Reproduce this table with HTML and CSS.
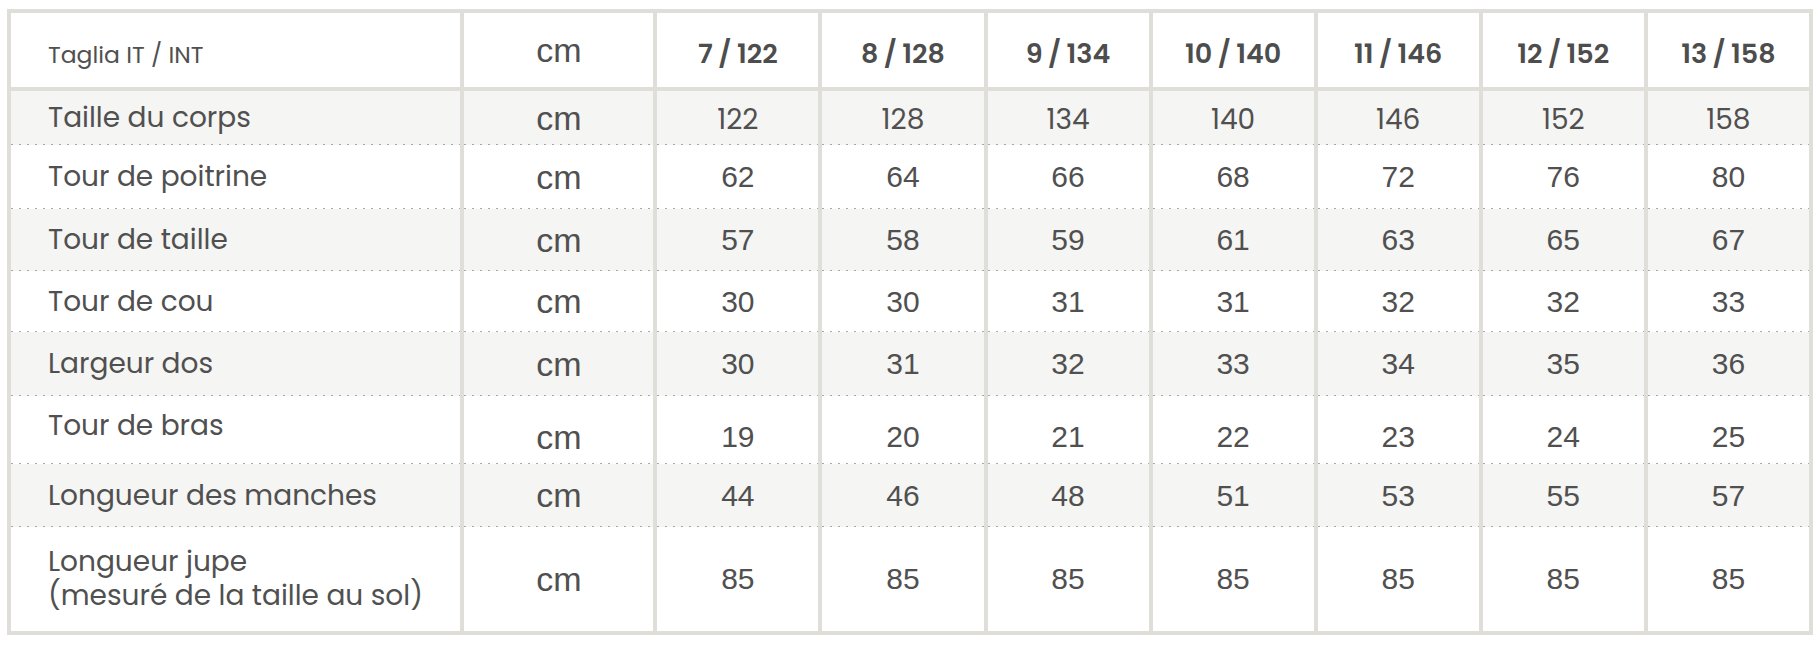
FILE: index.html
```html
<!DOCTYPE html>
<html lang="fr">
<head>
<meta charset="utf-8">
<title>Guide des tailles</title>
<link rel="stylesheet" href="styles.css">
</head>
<body>
<div class="page">
<table class="sizes">
  <colgroup>
    <col class="c-label">
    <col class="c-unit">
    <col class="c-size"><col class="c-size"><col class="c-size"><col class="c-size"><col class="c-size"><col class="c-size"><col class="c-size">
  </colgroup>
  <thead>
    <tr class="head">
      <th class="label head-label">Taglia IT / INT</th>
      <th class="unit head-unit">cm</th>
      <th class="size">7 / 122</th>
      <th class="size">8 / 128</th>
      <th class="size">9 / 134</th>
      <th class="size">10 / 140</th>
      <th class="size">11 / 146</th>
      <th class="size">12 / 152</th>
      <th class="size">13 / 158</th>
    </tr>
  </thead>
  <tbody>
    <tr class="shade r1">
      <td class="label">Taille du corps</td><td class="unit">cm</td>
      <td class="num alt">122</td><td class="num alt">128</td><td class="num alt">134</td><td class="num alt">140</td><td class="num alt">146</td><td class="num alt">152</td><td class="num alt">158</td>
    </tr>
    <tr class="r2">
      <td class="label">Tour de poitrine</td><td class="unit">cm</td>
      <td class="num">62</td><td class="num">64</td><td class="num">66</td><td class="num">68</td><td class="num">72</td><td class="num">76</td><td class="num">80</td>
    </tr>
    <tr class="shade r3">
      <td class="label">Tour de taille</td><td class="unit">cm</td>
      <td class="num">57</td><td class="num">58</td><td class="num">59</td><td class="num">61</td><td class="num">63</td><td class="num">65</td><td class="num">67</td>
    </tr>
    <tr class="r4">
      <td class="label">Tour de cou</td><td class="unit">cm</td>
      <td class="num">30</td><td class="num">30</td><td class="num">31</td><td class="num">31</td><td class="num">32</td><td class="num">32</td><td class="num">33</td>
    </tr>
    <tr class="shade r5">
      <td class="label">Largeur dos</td><td class="unit">cm</td>
      <td class="num">30</td><td class="num">31</td><td class="num">32</td><td class="num">33</td><td class="num">34</td><td class="num">35</td><td class="num">36</td>
    </tr>
    <tr class="r6">
      <td class="label label-top">Tour de bras</td><td class="unit low">cm</td>
      <td class="num low">19</td><td class="num low">20</td><td class="num low">21</td><td class="num low">22</td><td class="num low">23</td><td class="num low">24</td><td class="num low">25</td>
    </tr>
    <tr class="shade r7">
      <td class="label">Longueur des manches</td><td class="unit">cm</td>
      <td class="num">44</td><td class="num">46</td><td class="num">48</td><td class="num">51</td><td class="num">53</td><td class="num">55</td><td class="num">57</td>
    </tr>
    <tr class="r8 last">
      <td class="label">Longueur jupe<br>(mesuré de la taille au sol)</td><td class="unit">cm</td>
      <td class="num">85</td><td class="num">85</td><td class="num">85</td><td class="num">85</td><td class="num">85</td><td class="num">85</td><td class="num">85</td>
    </tr>
  </tbody>
</table>
</div>
</body>
</html>
```

FILE: styles.css
```css
html, body {
  margin: 0;
  padding: 0;
  background: #ffffff;
}

.page {
  padding: 9px 0 0 7px;
}

.sizes {
  width: 1806px;
  table-layout: fixed;
  border-collapse: collapse;
  border: 4px solid #dfded8;
  color: #505050;
  font-family: "Poppins", "Open Sans", "Noto Sans", sans-serif;
}

.c-label { width: 453px; }
.c-unit { width: 193px; }
.c-size { width: 165px; }

.sizes th,
.sizes td {
  border-left: 4px solid #dfded8;
  border-right: 4px solid #dfded8;
  padding: 0;
  vertical-align: middle;
  line-height: 1.2;
}

.sizes thead tr.head {
  height: 78px;
}

.sizes thead th {
  border-bottom: 4px solid #dfded8;
  background: #ffffff;
}

.sizes th.head-label {
  text-align: left;
  padding-left: 37px;
  padding-top: 11px;
  font-size: 23.5px;
  font-weight: 400;
}

.sizes th.head-unit {
  font-family: "Liberation Sans", Arial, sans-serif;
  font-weight: 400;
  font-size: 34px;
}

.sizes th.size {
  padding-top: 9px;
  font-size: 27px;
  font-weight: 600;
  color: #4d4d4d;
  word-spacing: -1px;
}

.sizes tbody td {
  background-image: linear-gradient(to right, #a8a8a8 0, #a8a8a8 2px, transparent 2px, transparent 100%);
  background-size: 8px 1px;
  background-repeat: repeat-x;
  background-position: left bottom;
  background-color: #ffffff;
}

.sizes tbody tr.shade td {
  background-color: #f5f5f3;
}

.sizes tbody tr.last td {
  background-image: none;
}

.sizes td.label {
  text-align: left;
  padding-left: 37px;
  font-size: 28px;
  line-height: 34px;
}

.sizes td.label-top {
  vertical-align: top;
  padding-top: 13px;
}

.sizes td.unit {
  text-align: center;
  font-family: "Liberation Sans", Arial, sans-serif;
  font-size: 34px;
}

.sizes td.num {
  text-align: center;
  font-family: "Liberation Sans", Arial, sans-serif;
  font-size: 30px;
}

.sizes td.num.alt {
  font-family: "Poppins", "Open Sans", sans-serif;
  font-size: 28px;
  padding-top: 3px;
}

.sizes td.low {
  padding-top: 14px;
}

.r1 { height: 56px; }
.r2 { height: 64px; }
.r3 { height: 62px; }
.r4 { height: 61px; }
.r5 { height: 64px; }
.r6 { height: 68px; }
.r7 { height: 63px; }
.r8 { height: 106px; }
```
